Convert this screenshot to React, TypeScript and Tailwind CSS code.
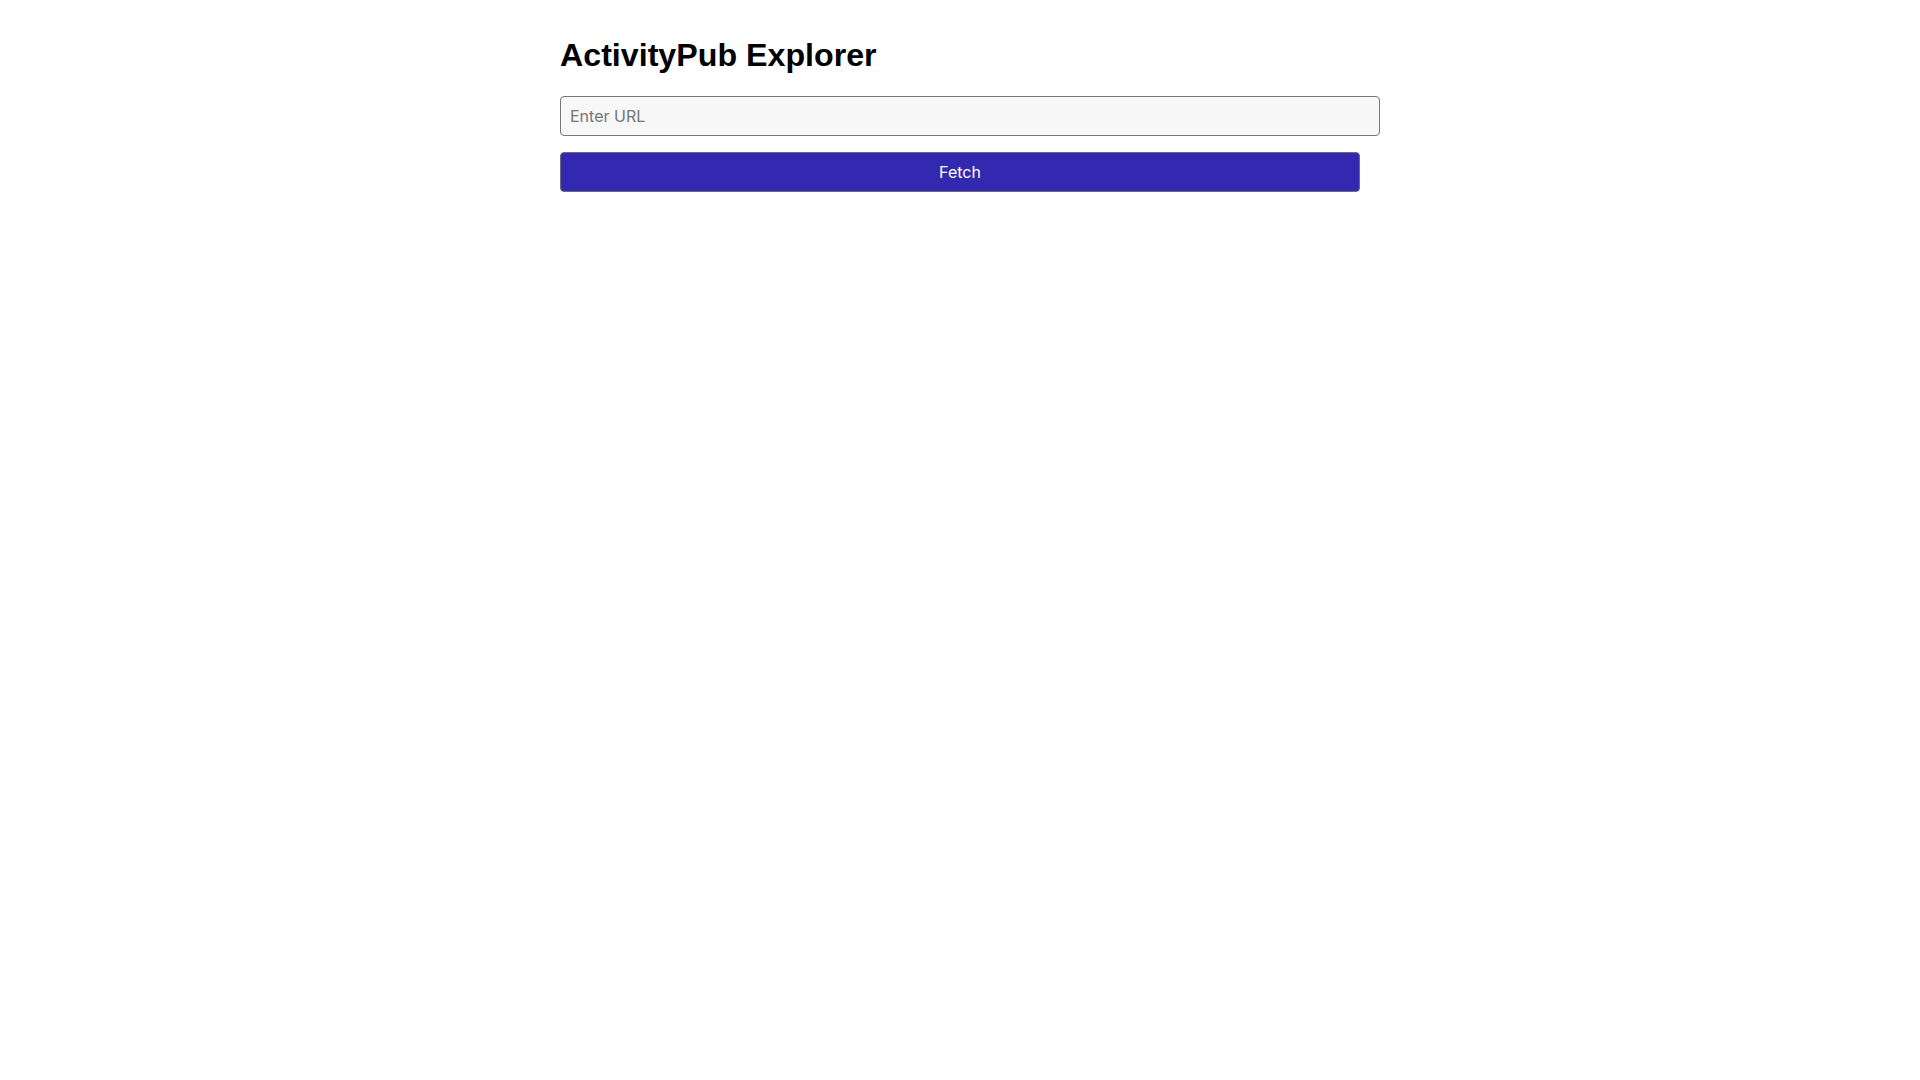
export default function App() {
  return (
    <div className="min-h-screen bg-white">
      <div className="mx-auto w-[800px] pt-[37px]">
        <h1 className="m-0 mb-[22px] text-[32.2px] font-bold leading-[37px] text-black [font-family:'Liberation_Sans',Arial,sans-serif]">
          ActivityPub Explorer
        </h1>
        <input
          type="text"
          placeholder="Enter URL"
          className="box-border block h-[40px] w-[820px] rounded-[4px] border border-[#767676] bg-[#f7f7f7] pl-[9px] pr-2 text-[16px] text-black placeholder:text-[#757575] outline-none [font-family:Inter,sans-serif]"
        />
        <button
          type="button"
          className="mt-[16px] box-border block h-[40px] w-[800px] rounded-[4px] border border-[#6b6b7a] bg-[#3329b0] text-[16px] text-white [font-family:Inter,sans-serif]"
        >
          Fetch
        </button>
      </div>
    </div>
  );
}
